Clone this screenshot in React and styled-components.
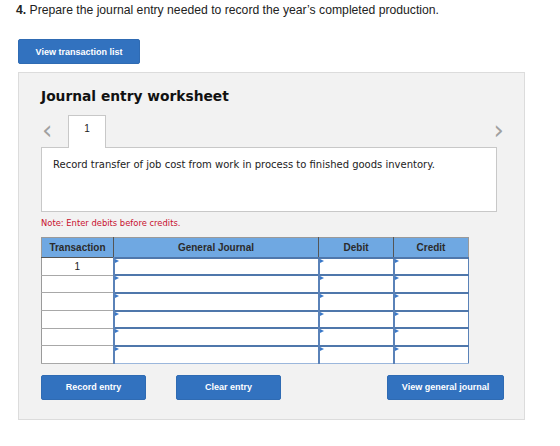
import React from 'react';
import styled, { createGlobalStyle } from 'styled-components';

const GlobalStyle = createGlobalStyle`
  body {
    margin: 0;
    background: #ffffff;
    font-family: "Liberation Sans", Arial, sans-serif;
  }
`;

const rows = ['1', '', '', '', '', ''];

const App = () => {
  return (
    <Page>
      <GlobalStyle />
      <Question>
        <strong>4.</strong> Prepare the journal entry needed to record the year’s completed production.
      </Question>
      <BlueButton>View transaction list</BlueButton>
      <Panel>
        <Heading>Journal entry worksheet</Heading>
        <TabRow>
          <Chevron>‹</Chevron>
          <Tab>1</Tab>
          <Spacer />
          <Chevron>›</Chevron>
        </TabRow>
        <DescBox>Record transfer of job cost from work in process to finished goods inventory.</DescBox>
        <Note>Note: Enter debits before credits.</Note>
        <Table>
          <thead>
            <tr>
              <Th width={72}>Transaction</Th>
              <Th width={205}>General Journal</Th>
              <Th width={75}>Debit</Th>
              <Th width={75}>Credit</Th>
            </tr>
          </thead>
          <tbody>
            {rows.map((r, i) => (
              <tr key={i}>
                <TransCell>{r}</TransCell>
                <InputCell><Marker /></InputCell>
                <InputCell><Marker /></InputCell>
                <InputCell><Marker /></InputCell>
              </tr>
            ))}
          </tbody>
        </Table>
        <ButtonRow>
          <BlueButton wide={105}>Record entry</BlueButton>
          <BlueButton wide={105}>Clear entry</BlueButton>
          <Spacer />
          <BlueButton wide={117}>View general journal</BlueButton>
        </ButtonRow>
      </Panel>
    </Page>
  );
};

export default App;

const Page = styled.div`
  padding: 2px 0 0 16px;
  width: 544px;
`;

const Question = styled.p`
  margin: 0 0 21px;
  font-size: 12.2px;
  line-height: 16px;
  color: #222;

  strong {
    font-weight: bold;
  }
`;

const BlueButton = styled.button`
  display: block;
  width: ${p => (p.wide ? `${p.wide}px` : '122px')};
  height: 25px;
  margin: 0 0 0 2px;
  padding: 0;
  background: #3272bf;
  color: #ffffff;
  border: 1px solid #2f6bb3;
  border-radius: 2px;
  font-family: "Liberation Sans", Arial, sans-serif;
  font-size: 9px;
  font-weight: bold;
  cursor: pointer;
`;

const Panel = styled.div`
  box-sizing: border-box;
  width: 507px;
  height: 348px;
  margin: 8px 0 0 2px;
  padding: 12px 0 0 22px;
  background: #f2f2f2;
  border: 1px solid #dcdcdc;
`;

const Heading = styled.h2`
  margin: 0;
  font-family: "DejaVu Sans", Verdana, sans-serif;
  font-size: 13.8px;
  font-weight: bold;
  line-height: 22px;
  color: #111;
`;

const TabRow = styled.div`
  display: flex;
  align-items: flex-end;
  width: 463px;
  margin-top: 8px;
  height: 32px;
`;

const Chevron = styled.span`
  width: 26px;
  align-self: center;
  text-align: left;
  font-family: "DejaVu Sans", sans-serif;
  font-size: 26px;
  line-height: 20px;
  color: #a0a0a0;
  padding-left: 1px;
  margin-top: -2px;

  &:last-child {
    width: auto;
  }
`;

const Tab = styled.div`
  box-sizing: border-box;
  width: 38px;
  height: 33px;
  margin-bottom: -1px;
  padding-top: 7px;
  background: #ffffff;
  border: 1px solid #c8c8c8;
  border-bottom: none;
  text-align: center;
  font-size: 10px;
  color: #222;
  position: relative;
  z-index: 1;
`;

const Spacer = styled.div`
  flex: 1;
`;

const DescBox = styled.div`
  box-sizing: border-box;
  width: 456px;
  height: 65px;
  padding: 11px 0 0 11px;
  background: #ffffff;
  border: 1px solid #c8c8c8;
  font-family: "DejaVu Sans", Verdana, sans-serif;
  font-size: 10px;
  color: #222;
`;

const Note = styled.div`
  margin-top: 6px;
  font-family: "DejaVu Sans", Verdana, sans-serif;
  font-size: 8.4px;
  line-height: 10px;
  color: #c8102e;
`;

const Table = styled.table`
  margin-top: 9px;
  border-collapse: collapse;
  table-layout: fixed;
  width: 427px;
  border: 1px solid #9a9a9a;
`;

const Th = styled.th`
  box-sizing: border-box;
  width: ${p => p.width}px;
  height: 20px;
  padding: 0;
  background: #6fa8e2;
  border-left: 1px solid #555;
  border-bottom: 1px solid #555;
  font-size: 10px;
  font-weight: bold;
  color: #2b2b2b;
  text-align: center;

  &:first-child {
    border-left: none;
  }
`;

const TransCell = styled.td`
  height: 15.7px;
  padding: 0;
  background: #ffffff;
  border: 1px solid #a8a8a8;
  border-width: 1px 0 1px 0;
  text-align: center;
  font-size: 10px;
  color: #222;
`;

const InputCell = styled.td`
  position: relative;
  height: 15.7px;
  padding: 0;
  background: #ffffff;
  border-top: 2px solid #4f77ab;
  border-left: 2px solid #5a82b8;
  border-right: 1px solid #5a82b8;
  border-bottom: 1px solid #9bb7dc;
`;

const Marker = styled.span`
  position: absolute;
  left: 0;
  top: 0;
  width: 0;
  height: 0;
  border-top: 2.5px solid transparent;
  border-bottom: 2.5px solid transparent;
  border-left: 4px solid #3a78c8;
`;

const ButtonRow = styled.div`
  display: flex;
  gap: 30px;
  width: 463px;
  margin-top: 11px;

  button {
    margin: 0;
  }
`;
